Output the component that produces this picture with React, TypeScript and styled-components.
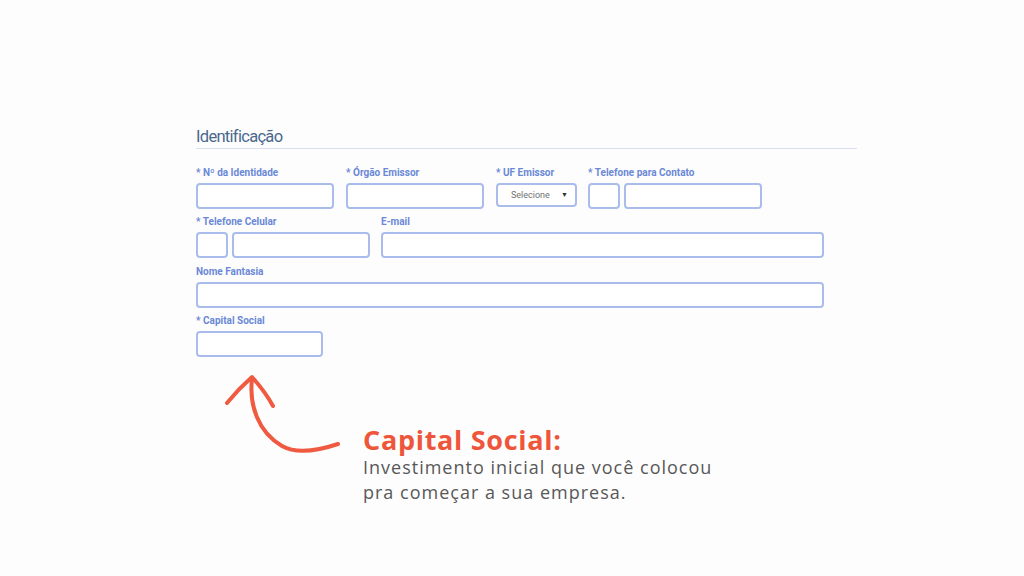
import React from 'react'
import styled, { createGlobalStyle } from 'styled-components'

const GlobalStyle = createGlobalStyle`
  html, body {
    margin: 0;
    padding: 0;
    background: #fdfdfd;
  }

  body {
    font-family: Roboto, "Liberation Sans", Arial, sans-serif;
    width: 1024px;
    height: 576px;
    overflow: hidden;
  }
`;

const Page = styled.div`
  padding: 127px 0 0 196px;
`;

const Section = styled.section`
  width: 661px;
`;

const Title = styled.h2`
  margin: 0;
  padding-bottom: 2px;
  font-size: 16.5px;
  line-height: 19px;
  font-weight: 400;
  letter-spacing: -0.7px;
  color: #48698c;
  border-bottom: 1px solid #d9e0f1;
`;

const Fields = styled.div`
  display: flex;
  flex-direction: column;
  gap: 7.5px;
  margin-top: 17.5px;
`;

const Row = styled.div<{ $gap?: number }>`
  display: flex;
  align-items: flex-start;
  gap: ${(p) => p.$gap ?? 12}px;
`;

const Field = styled.div<{ $w: number }>`
  display: flex;
  flex-direction: column;
  width: ${(p) => p.$w}px;
`;

const Label = styled.label`
  display: block;
  margin-bottom: 4px;
  font-size: 10px;
  line-height: 12px;
  font-weight: 700;
  color: #6a88d6;
  white-space: nowrap;
`;

const Input = styled.input<{ $w?: number }>`
  box-sizing: border-box;
  width: ${(p) => (p.$w ? `${p.$w}px` : '100%')};
  height: 26px;
  margin: 0;
  border: 2px solid #a9bceb;
  border-radius: 4px;
  background: #fff;
  outline: none;
`;

const PhoneGroup = styled.div`
  display: flex;
  gap: 4px;
`;

const Select = styled.div`
  box-sizing: border-box;
  display: flex;
  align-items: center;
  justify-content: space-between;
  width: 81px;
  height: 24px;
  padding: 0 7px 0 13px;
  border: 2px solid #a9bceb;
  border-radius: 4px;
  background: #fff;
  font-size: 9px;
  color: #707070;
`;

const Caret = styled.span`
  font-size: 7px;
  color: #333;
`;

const Annotation = styled.div`
  display: flex;
  align-items: flex-start;
  margin: 13px 0 0 24px;
`;

const Arrow = styled.svg`
  flex: none;
  width: 130px;
  height: 90px;
  margin-right: 13px;
`;

const Note = styled.div`
  margin-top: 55px;
  font-family: "Open Sans", "Liberation Sans", sans-serif;
`;

const NoteTitle = styled.div`
  font-size: 27px;
  line-height: 30px;
  font-weight: 700;
  letter-spacing: 0.7px;
  color: #ee553a;
`;

const NoteText = styled.p`
  margin: 0;
  font-size: 18px;
  line-height: 24.5px;
  letter-spacing: 1px;
  color: #585858;
`;

export default function App() {
  return (
    <Page>
      <GlobalStyle />
      <Section>
        <Title>Identificação</Title>
        <Fields>
          <Row>
            <Field $w={138}>
              <Label>* Nº da Identidade</Label>
              <Input />
            </Field>
            <Field $w={138}>
              <Label>* Órgão Emissor</Label>
              <Input />
            </Field>
            <Row $gap={11}>
              <Field $w={81}>
                <Label>* UF Emissor</Label>
                <Select>
                  Selecione
                  <Caret>▼</Caret>
                </Select>
              </Field>
              <Field $w={174}>
                <Label>* Telefone para Contato</Label>
                <PhoneGroup>
                  <Input $w={32} />
                  <Input $w={138} />
                </PhoneGroup>
              </Field>
            </Row>
          </Row>

          <Row $gap={11}>
            <Field $w={174}>
              <Label>* Telefone Celular</Label>
              <PhoneGroup>
                <Input $w={32} />
                <Input $w={138} />
              </PhoneGroup>
            </Field>
            <Field $w={443}>
              <Label>E-mail</Label>
              <Input />
            </Field>
          </Row>

          <Row>
            <Field $w={628}>
              <Label>Nome Fantasia</Label>
              <Input />
            </Field>
          </Row>

          <Row>
            <Field $w={127}>
              <Label>* Capital Social</Label>
              <Input />
            </Field>
          </Row>
        </Fields>
      </Section>

      <Annotation>
        <Arrow viewBox="0 0 130 90">
          <g fill="none" stroke="#ef5a40" strokeWidth={4} strokeLinecap="round" strokeLinejoin="round">
            <path d="M32 9 C29 35, 38 62, 62 76 C78 85, 100 80, 118 74" />
            <path d="M7 33 C16 22, 24 14, 32 7 C40 16, 47 25, 53 36" />
          </g>
        </Arrow>
        <Note>
          <NoteTitle>Capital Social:</NoteTitle>
          <NoteText>
            Investimento inicial que você colocou
            <br />
            pra começar a sua empresa.
          </NoteText>
        </Note>
      </Annotation>
    </Page>
  )
}
